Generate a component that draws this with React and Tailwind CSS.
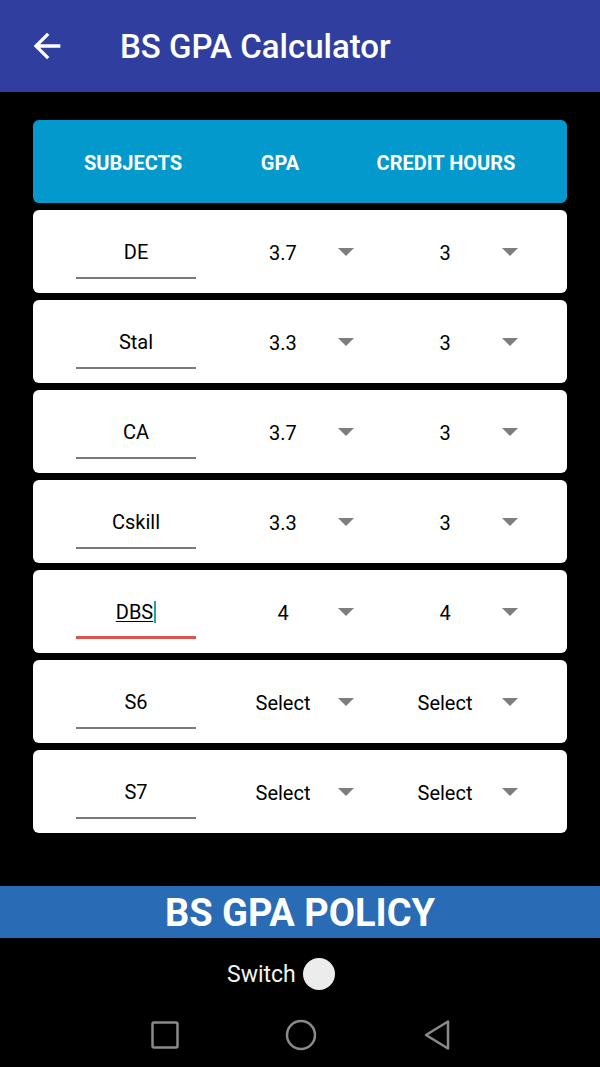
import React from 'react'

const rows = [
  { name: 'DE', gpa: '3.7', ch: '3' },
  { name: 'Stal', gpa: '3.3', ch: '3' },
  { name: 'CA', gpa: '3.7', ch: '3' },
  { name: 'Cskill', gpa: '3.3', ch: '3' },
  { name: 'DBS', gpa: '4', ch: '4', focused: true },
  { name: 'S6', gpa: 'Select', ch: 'Select' },
  { name: 'S7', gpa: 'Select', ch: 'Select' },
]

const Caret = () => (
  <svg width="16" height="8" viewBox="0 0 16 8" className="shrink-0">
    <path d="M0 0h16L8 8z" fill="#7d7d7d" />
  </svg>
)

const Row = ({ row }) => (
  <div className="flex h-[83px] items-center rounded-[6px] bg-white text-[20px] text-black">
    {/* subject input */}
    <div className="ml-[43px] flex w-[120px] flex-col self-stretch pt-[30px]">
      <div className="flex h-[24px] items-center justify-center leading-[24px]">
        {row.focused ? (
          <span className="flex items-center">
            <span className="underline decoration-1 underline-offset-2">{row.name}</span>
            <span className="ml-[1px] h-[22px] w-[2px] bg-[#26a69a]" />
          </span>
        ) : (
          row.name
        )}
      </div>
      {row.focused ? (
        <div className="mt-[12px] h-[3px] bg-[#d9534f]" />
      ) : (
        <div className="mt-[13px] h-[2px] bg-[#7a7a7a]" />
      )}
    </div>
    {/* gpa spinner */}
    <div className="ml-[37px] w-[100px] pt-[2px] text-center">{row.gpa}</div>
    <div className="ml-[5px]"><Caret /></div>
    {/* credit hours spinner */}
    <div className="ml-[41px] w-[100px] pt-[2px] text-center">{row.ch}</div>
    <div className="ml-[7px]"><Caret /></div>
  </div>
)

export default function App() {
  return (
    <div className="flex h-[1067px] w-[600px] flex-col bg-black" style={{ fontFamily: 'Roboto, "Liberation Sans", sans-serif' }}>
      {/* App bar */}
      <div className="flex h-[92px] shrink-0 items-center bg-[#303f9f]">
        <svg width="40" height="40" viewBox="0 0 24 24" className="ml-[27px]">
          <path d="M20 11H7.83l5.59-5.59L12 4l-8 8 8 8 1.41-1.41L7.83 13H20v-2z" fill="#fff" />
        </svg>
        <h1 className="ml-[53px] pt-[2px] text-[33px] font-medium text-white">BS GPA Calculator</h1>
      </div>

      {/* Table */}
      <div className="flex flex-col gap-[7px] px-[33px] pt-[28px]">
        <div className="flex h-[83px] items-center rounded-[6px] bg-[#0399cd] pt-[2px] text-[20px] font-bold text-white">
          <div className="ml-[20px] w-[160px] text-center">SUBJECTS</div>
          <div className="ml-[17px] w-[100px] text-center">GPA</div>
          <div className="ml-[26px] w-[180px] text-center">CREDIT HOURS</div>
        </div>
        {rows.map((r) => (
          <Row key={r.name} row={r} />
        ))}
      </div>

      {/* Policy banner */}
      <div className="mt-[53px] flex h-[52px] items-center justify-center bg-[#2a6bb5]">
        <span className="pt-[3px] text-[38px] font-bold text-white">BS GPA POLICY</span>
      </div>

      {/* Switch */}
      <div className="flex h-[72px] items-center">
        <span className="ml-[227px] pt-[2px] text-[23px] text-[#f2f2f2]">Switch</span>
        <span className="ml-[7px] h-[32px] w-[32px] rounded-full bg-[#ececec]" />
      </div>

      {/* Nav bar */}
      <div className="flex flex-1 items-center justify-center gap-[106px] pb-[8px]">
        <svg width="28" height="28" viewBox="0 0 28 28" className="ml-[4px]">
          <rect x="1.5" y="1.5" width="25" height="25" rx="1.5" fill="none" stroke="#8a8a8a" strokeWidth="2.5" />
        </svg>
        <svg width="32" height="32" viewBox="0 0 32 32">
          <circle cx="16" cy="16" r="14" fill="none" stroke="#8a8a8a" strokeWidth="2.5" />
        </svg>
        <svg width="28" height="32" viewBox="0 0 28 32" className="mr-[2px]">
          <path d="M25 2.5v27L3 16z" fill="none" stroke="#8a8a8a" strokeWidth="2.5" strokeLinejoin="round" />
        </svg>
      </div>
    </div>
  )
}
